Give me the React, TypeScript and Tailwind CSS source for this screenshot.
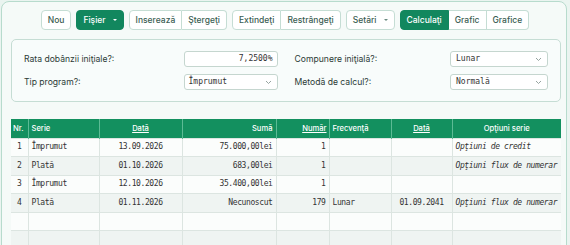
import React from "react";

const btnBase =
  "h-[20px] px-[6px] flex items-center text-[8.5px] font-medium border border-[#c5ddd4] bg-white text-[#3a5d52]";

function Caret({ white }: { white?: boolean }) {
  return (
    <span
      className={`ml-[7px] inline-block w-0 h-0 border-l-[2.5px] border-r-[2.5px] border-t-[2.5px] border-l-transparent border-r-transparent ${
        white ? "border-t-white" : "border-t-[#6a8a80]"
      }`}
    />
  );
}

function Chevron() {
  return (
    <svg width="7" height="5" viewBox="0 0 7 5" className="ml-auto">
      <path d="M1 1 L3.5 3.5 L6 1" fill="none" stroke="#8a9a95" strokeWidth="0.9" />
    </svg>
  );
}

const rows = [
  { nr: "1", serie: "Împrumut", data: "13.09.2026", suma: "75.000,00lei", numar: "1", frec: "", data2: "", opt: "Opţiuni de credit" },
  { nr: "2", serie: "Plată", data: "01.10.2026", suma: "683,00lei", numar: "1", frec: "", data2: "", opt: "Opţiuni flux de numerar" },
  { nr: "3", serie: "Împrumut", data: "12.10.2026", suma: "35.400,00lei", numar: "1", frec: "", data2: "", opt: "" },
  { nr: "4", serie: "Plată", data: "01.11.2026", suma: "Necunoscut", numar: "179", frec: "Lunar", data2: "01.09.2041", opt: "Opţiuni flux de numerar" },
  { nr: "", serie: "", data: "", suma: "", numar: "", frec: "", data2: "", opt: "" },
  { nr: "", serie: "", data: "", suma: "", numar: "", frec: "", data2: "", opt: "" },
];

const mono = { fontFamily: '"DejaVu Sans Mono", "Liberation Mono", monospace' };

export default function App() {
  return (
    <div className="w-[570px] h-[245px] overflow-hidden bg-[#eaf4f0]" style={{ fontFamily: "Inter, 'Noto Sans', sans-serif" }}>
      <div className="ml-[1px] mt-[1px] w-[566px] h-[260px] border border-[#b7dbcd] rounded-[8px] bg-[#f5faf8]">
        {/* toolbar */}
        <div className="flex justify-center gap-[5px] pt-[8px] pl-[2px]">
          <button className={`${btnBase} rounded-[4px] text-[#1f5a45]`}>Nou</button>
          <button className="h-[20px] px-[6px] flex items-center text-[8.5px] font-medium rounded-[4px] bg-[#12875e] text-white border border-[#12875e]">
            Fişier
            <Caret white />
          </button>
          <div className="flex">
            <button className={`${btnBase} rounded-l-[4px]`}>Inserează</button>
            <button className={`${btnBase} rounded-r-[4px] border-l-0`}>Ştergeţi</button>
          </div>
          <div className="flex">
            <button className={`${btnBase} rounded-l-[4px]`}>Extindeţi</button>
            <button className={`${btnBase} rounded-r-[4px] border-l-0`}>Restrângeţi</button>
          </div>
          <button className={`${btnBase} rounded-[4px]`}>
            Setări
            <Caret />
          </button>
          <div className="flex">
            <button className="h-[20px] px-[6px] flex items-center text-[8.5px] font-medium rounded-l-[4px] bg-[#12875e] text-white border border-[#12875e]">
              Calculaţi
            </button>
            <button className={`${btnBase} border-l-0`}>Grafic</button>
            <button className={`${btnBase} rounded-r-[4px] border-l-0`}>Grafice</button>
          </div>
        </div>

        {/* settings panel */}
        <div className="ml-[9px] mt-[9px] w-[550px] border border-[#c5ddd4] rounded-[5px] bg-[#f8fcfb] px-[12px] pt-[11px] pb-[11px] grid grid-cols-2 gap-x-[17px] gap-y-[7px] text-[8.6px] text-[#2b3a35]">
          <div className="flex items-center h-[16px]">
            <span>Rata dobânzii iniţiale?:</span>
            <div className="ml-auto w-[94px] h-[16px] border border-[#c5d6cf] rounded-[3px] bg-white flex items-center justify-end pr-[4px] text-[8px] text-[#333]" style={mono}>
              7,2500%
            </div>
          </div>
          <div className="flex items-center h-[16px]">
            <span>Compunere iniţială?:</span>
            <div className="ml-auto w-[98px] h-[16px] border border-[#c5d6cf] rounded-[3px] bg-white flex items-center pl-[5px] pr-[5px] text-[8px] text-[#333]" style={mono}>
              Lunar
              <Chevron />
            </div>
          </div>
          <div className="flex items-center h-[16px]">
            <span>Tip program?:</span>
            <div className="ml-auto w-[94px] h-[16px] border border-[#c5d6cf] rounded-[3px] bg-white flex items-center pl-[4px] pr-[5px] text-[8px] text-[#333]" style={mono}>
              Împrumut
              <Chevron />
            </div>
          </div>
          <div className="flex items-center h-[16px]">
            <span>Metodă de calcul?:</span>
            <div className="ml-auto w-[98px] h-[16px] border border-[#c5d6cf] rounded-[3px] bg-white flex items-center pl-[5px] pr-[5px] text-[8px] text-[#333]" style={mono}>
              Normală
              <Chevron />
            </div>
          </div>
        </div>

        {/* table */}
        <table className="ml-[9px] mt-[17px] w-[550px] border-collapse table-fixed">
          <colgroup>
            <col className="w-[17px]" />
            <col className="w-[71px]" />
            <col className="w-[83px]" />
            <col className="w-[94px]" />
            <col className="w-[53px]" />
            <col className="w-[62px]" />
            <col className="w-[61px]" />
            <col className="w-[109px]" />
          </colgroup>
          <thead>
            <tr className="h-[19px] bg-[#13905f] text-white text-[7.6px]">
              <th className="font-medium text-left pl-[2px] border-r border-[#5cbb95]">Nr.</th>
              <th className="font-medium text-left pl-[3px] border-r border-[#5cbb95]">Serie</th>
              <th className="font-medium text-center underline border-r border-[#5cbb95]">Dată</th>
              <th className="font-medium text-right pr-[3px] border-r border-[#5cbb95]">Sumă</th>
              <th className="font-medium text-right pr-[2px] underline border-r border-[#5cbb95]">Număr</th>
              <th className="font-medium text-left pl-[3px] border-r border-[#5cbb95]">Frecvenţă</th>
              <th className="font-medium text-center underline border-r border-[#5cbb95]">Dată</th>
              <th className="font-medium text-center">Opţiuni serie</th>
            </tr>
          </thead>
          <tbody style={mono} className="text-[#333] text-[8px] tracking-[-0.4px]">
            {rows.map((r, i) => (
              <tr key={i} className={`h-[18.5px] ${i % 2 === 0 ? "bg-[#fbfdfc]" : "bg-[#eff4f2]"}`}>
                <td className="border border-[#dce5e1] border-l-0 text-center">{r.nr}</td>
                <td className="border border-[#dce5e1] pl-[3px]">{r.serie}</td>
                <td className="border border-[#dce5e1] text-center">{r.data}</td>
                <td className="border border-[#dce5e1] text-right pr-[3px]">{r.suma}</td>
                <td className="border border-[#dce5e1] text-right pr-[3px]">{r.numar}</td>
                <td className="border border-[#dce5e1] pl-[3px]">{r.frec}</td>
                <td className="border border-[#dce5e1] text-center">{r.data2}</td>
                <td className="border border-[#dce5e1] border-r-0 pl-[3px] italic whitespace-nowrap overflow-hidden">{r.opt}</td>
              </tr>
            ))}
          </tbody>
        </table>
      </div>
    </div>
  );
}
